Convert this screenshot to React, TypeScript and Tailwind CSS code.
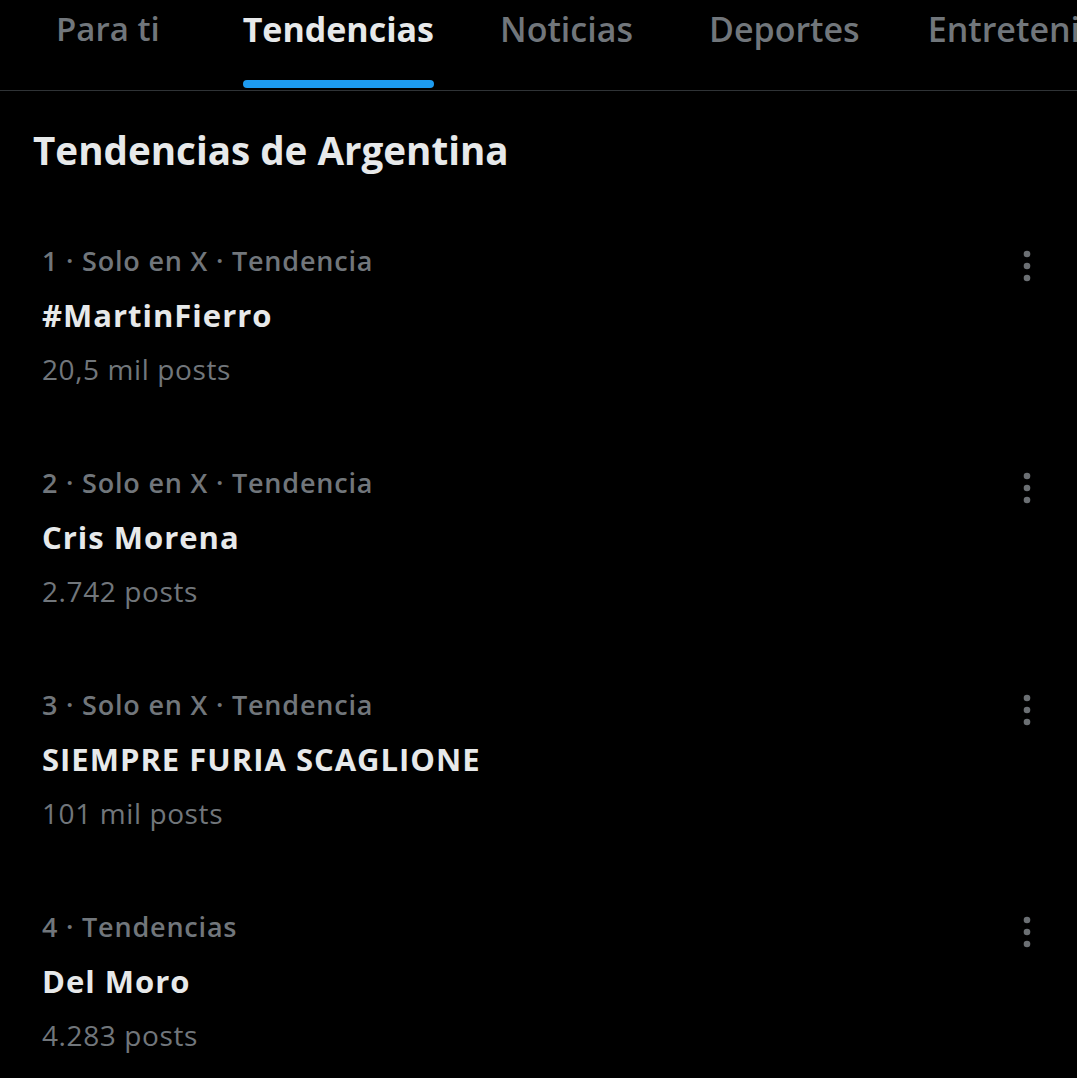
import React from "react";

const trends = [
  { meta: "1 · Solo en X · Tendencia", title: "#MartinFierro", posts: "20,5 mil posts" },
  { meta: "2 · Solo en X · Tendencia", title: "Cris Morena", posts: "2.742 posts" },
  { meta: "3 · Solo en X · Tendencia", title: "SIEMPRE FURIA SCAGLIONE", posts: "101 mil posts" },
  { meta: "4 · Tendencias", title: "Del Moro", posts: "4.283 posts" },
];

function Dots() {
  return (
    <svg width="12" height="36" viewBox="0 0 12 36" className="text-[#6b6f73]">
      <circle cx="6" cy="6" r="3.3" fill="currentColor" />
      <circle cx="6" cy="18" r="3.3" fill="currentColor" />
      <circle cx="6" cy="30" r="3.3" fill="currentColor" />
    </svg>
  );
}

export default function App() {
  return (
    <div
      className="w-[1077px] h-[1078px] bg-black overflow-hidden"
      style={{ fontFamily: '"Open Sans", "Noto Sans", sans-serif' }}
    >
      <div className="h-[91px] border-b border-[#2f3336] flex items-start whitespace-nowrap overflow-hidden">
        <div className="ml-[56px] mt-[9px] text-[33px] font-semibold text-[#71767b] leading-[40px]">Para ti</div>
        <div className="ml-[83px] flex flex-col items-stretch shrink-0">
          <div className="mt-[9px] text-[34px] font-bold text-[#e7e9ea] leading-[40px]">Tendencias</div>
          <div className="mt-[31px] h-[8px] rounded-full bg-[#1d9bf0]" />
        </div>
        <div className="ml-[66px] mt-[9px] text-[34px] font-semibold text-[#71767b] leading-[40px]">Noticias</div>
        <div className="ml-[76px] mt-[9px] text-[34px] font-semibold text-[#71767b] leading-[40px]">Deportes</div>
        <div className="ml-[68px] mt-[9px] text-[34px] font-semibold text-[#71767b] leading-[40px]">Entretenimiento</div>
      </div>
      <div className="px-[33px] mt-[35px] text-[38.6px] font-bold text-[#e7e9ea] leading-[48px] whitespace-nowrap">
        Tendencias de Argentina
      </div>
      <div className="mt-[60px]">
        {trends.map((t, i) => (
          <div key={i} className="flex items-start pl-[42px] pr-[44px] h-[222px]">
            <div className="flex-1 flex flex-col whitespace-nowrap">
              <div className="text-[27px] font-semibold tracking-[0.8px] text-[#71767b] leading-[54px] h-[54px]">{t.meta}</div>
              <div className="text-[31px] font-bold tracking-[1px] text-[#e7e9ea] leading-[54px] h-[54px]">{t.title}</div>
              <div className="text-[28px] tracking-[0.6px] text-[#71767b] leading-[54px] h-[54px]">{t.posts}</div>
            </div>
            <div className="mt-[14px]">
              <Dots />
            </div>
          </div>
        ))}
      </div>
    </div>
  );
}
